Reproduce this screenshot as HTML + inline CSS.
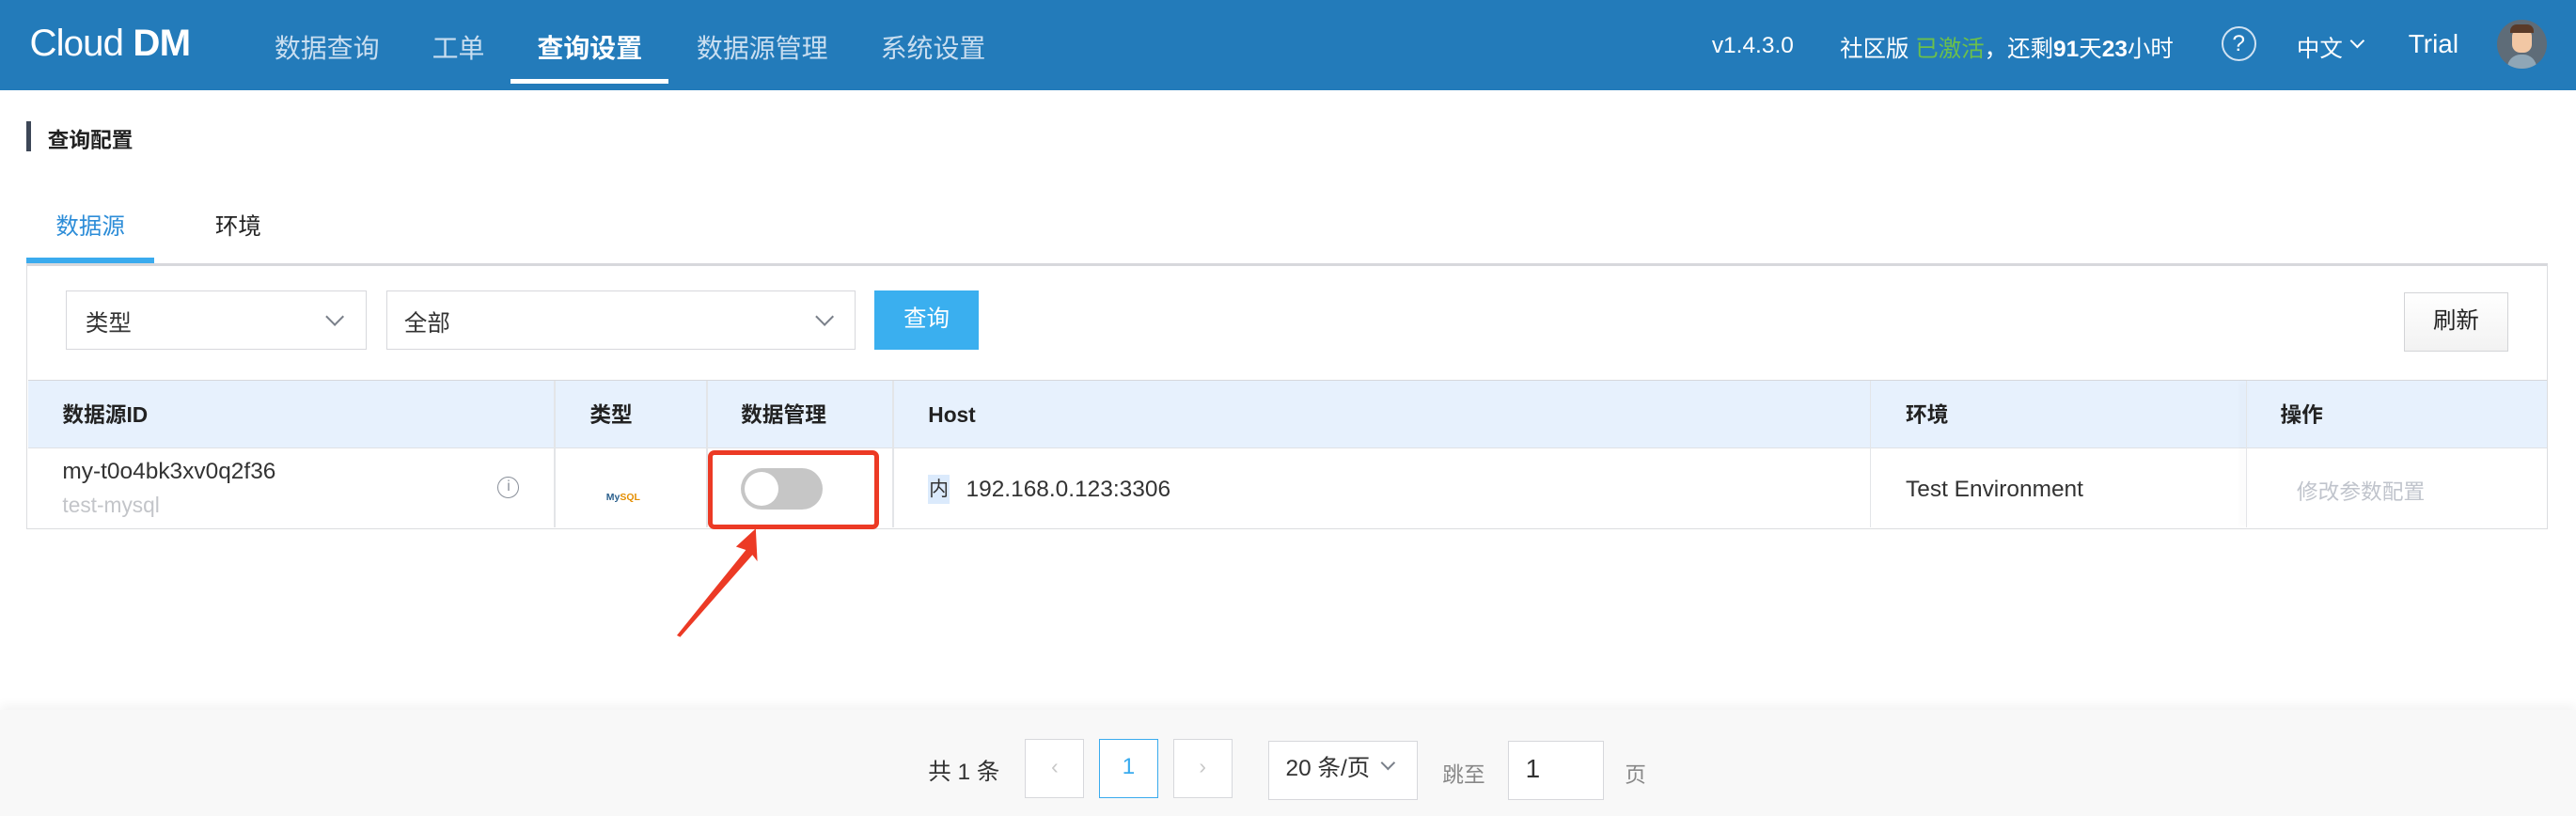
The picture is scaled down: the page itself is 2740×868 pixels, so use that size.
<!DOCTYPE html>
<html><head><meta charset="utf-8"><style>
html,body{margin:0;padding:0;width:2740px;height:868px;overflow:hidden;background:#fff}
#w{position:relative;width:1568px;height:497px;zoom:1.74745;font-family:"Liberation Sans","Noto Sans CJK SC",sans-serif;color:#333;font-size:13px}
.a{position:absolute;white-space:nowrap}
.hdr{left:0;top:0;width:1568px;height:55px;background:#237bba}
.nav{color:#c9def0;font-size:16px;top:17px}
.sel{border:1px solid #d7d8dc;background:#fff;box-sizing:border-box}
.chev{position:absolute;width:7px;height:7px;border-right:1.3px solid #7a808a;border-bottom:1.3px solid #7a808a;transform:rotate(45deg)}
.th{font-weight:bold;color:#222;top:244px;line-height:18px}
.vl{position:absolute;width:1px;background:#e3e5e8}
.pg{border:1px solid #d7d8dc;background:#fff;box-sizing:border-box;text-align:center;line-height:33px}
</style></head><body><div id="w">
<div class="a hdr"></div>
<div class="a" style="left:18px;top:13px;color:#fff;font-size:23px;letter-spacing:-0.5px">Cl<span style="font-size:22px">o</span>ud <span style="font-weight:bold">DM</span></div>
<div class="a nav" style="left:167px">数据查询</div>
<div class="a nav" style="left:263px">工单</div>
<div class="a nav" style="left:327px;color:#fff;font-weight:bold">查询设置</div>
<div class="a" style="left:311px;top:48px;width:96px;height:3px;background:#fff"></div>
<div class="a nav" style="left:424px">数据源管理</div>
<div class="a nav" style="left:536px">系统设置</div>
<div class="a" style="left:1042px;top:20px;color:#fff;font-size:14px">v1.4.3.0</div>
<div class="a" style="left:1120px;top:19px;color:#fff;font-size:14px">社区版 <span style="color:#6cc04a">已激活</span>，还剩<b>91</b>天<b>23</b>小时</div>
<div class="a" style="left:1352px;top:16px;width:19px;height:19px;border:1.5px solid #d0e2f2;border-radius:50%;color:#fff;text-align:center;line-height:19px;font-size:14px">?</div>
<div class="a" style="left:1398px;top:19px;color:#fff;font-size:14px">中文</div>
<div class="chev" style="left:1432px;top:22px;border-color:#fff;width:5px;height:5px"></div>
<div class="a" style="left:1466px;top:18px;color:#fff;font-size:16px">Trial</div>
<div class="a" style="left:1520px;top:12px;width:30px;height:30px;border-radius:50%;background:#5e6c78;overflow:hidden">
<div class="a" style="left:9px;top:5px;width:12px;height:15px;border-radius:5px;background:#f2c7a4"></div>
<div class="a" style="left:8px;top:3px;width:14px;height:5px;border-radius:4px 4px 0 0;background:#5a3a28"></div>
<div class="a" style="left:6px;top:21px;width:18px;height:12px;border-radius:8px 8px 0 0;background:#8fa6b6"></div></div>

<div class="a" style="left:16px;top:74px;width:3px;height:18px;background:#3d4757"></div>
<div class="a" style="left:29px;top:75px;font-weight:bold;color:#222">查询配置</div>

<div class="a" style="left:34px;top:127px;color:#2d8dd8;font-size:14px">数据源</div>
<div class="a" style="left:131px;top:127px;color:#222;font-size:14px">环境</div>
<div class="a" style="left:16px;top:160px;width:1535px;height:162px;border:1px solid #dcdde0;border-top:2px solid #d7d8dc;box-sizing:border-box"></div>
<div class="a" style="left:16px;top:157px;width:78px;height:3px;background:#3aabee"></div>

<div class="a sel" style="left:40px;top:177px;width:183px;height:36px"></div>
<div class="a" style="left:52px;top:186px;font-size:14px">类型</div>
<div class="chev" style="left:200px;top:189px"></div>
<div class="a sel" style="left:235px;top:177px;width:286px;height:36px"></div>
<div class="a" style="left:246px;top:186px;font-size:14px">全部</div>
<div class="chev" style="left:498px;top:189px"></div>
<div class="a" style="left:532px;top:177px;width:64px;height:36px;background:#3aafef;color:#fff;font-size:14px;text-align:center;line-height:36px">查询</div>
<div class="a" style="left:1463px;top:178px;width:64px;height:36px;border:1px solid #d3d4d7;box-sizing:border-box;background:linear-gradient(#fff,#f2f2f2);font-size:14px;text-align:center;line-height:34px;color:#222">刷新</div>

<div class="a" style="left:17px;top:231px;width:1533px;height:41px;background:#e7f1fd;border-top:1px solid #d7d8dc;border-bottom:1px solid #e0e2e5"></div>
<div class="vl" style="left:337px;top:232px;height:89px"></div>
<div class="vl" style="left:430px;top:232px;height:89px"></div>
<div class="vl" style="left:543px;top:232px;height:89px"></div>
<div class="vl" style="left:1138px;top:232px;height:89px"></div>
<div class="vl" style="left:1367px;top:232px;height:89px;box-shadow:-2px 0 4px rgba(0,0,0,.12)"></div>
<div class="a th" style="left:38px">数据源ID</div>
<div class="a th" style="left:359px">类型</div>
<div class="a th" style="left:451px">数据管理</div>
<div class="a th" style="left:565px">Host</div>
<div class="a th" style="left:1160px">环境</div>
<div class="a th" style="left:1388px">操作</div>

<div class="a" style="left:38px;top:279px;font-size:14px">my-t0o4bk3xv0q2f36</div>
<div class="a" style="left:38px;top:300px;color:#c3c5c9">test-mysql</div>
<div class="a" style="left:303px;top:290px;width:12px;height:12px;border:1px solid #8a909a;border-radius:50%;font-size:9px;text-align:center;line-height:12px;color:#8a909a">i</div>
<div class="a" style="left:369px;top:300px;font-size:6px;color:#2a5f8c;font-weight:bold">My<span style="color:#e48e00">SQL</span></div>
<div class="a" style="left:451px;top:285px;width:50px;height:25px;border-radius:13px;background:#c6c6c6"></div>
<div class="a" style="left:453px;top:287px;width:21px;height:21px;border-radius:50%;background:#fff"></div>
<div class="a" style="left:431px;top:274px;width:104px;height:48px;border:3px solid #ec3a25;border-radius:4px;box-sizing:border-box"></div>
<svg class="a" style="left:400px;top:315px" width="80" height="80"><path d="M60 7 L48 18 L54 20 L12 72 L14 73 L58 23 L61 27 Z" fill="#ec3a25"/></svg>
<div class="a" style="left:565px;top:289px;width:13px;height:18px;background:#dbeafc;font-size:12px;line-height:18px;text-align:center">内</div>
<div class="a" style="left:588px;top:290px;font-size:14px">192.168.0.123:3306</div>
<div class="a" style="left:1160px;top:290px;font-size:14px">Test Environment</div>
<div class="a" style="left:1398px;top:289px;color:#c0c4cc">修改参数配置</div>

<div class="a" style="left:0;top:432px;width:1568px;height:65px;background:#f8f8f8;box-shadow:0 -3px 6px rgba(0,0,0,.05)"></div>
<div class="a" style="left:565px;top:459px;font-size:14px">共 1 条</div>
<div class="a pg" style="left:624px;top:450px;width:36px;height:36px;color:#c8c8c8">‹</div>
<div class="a pg" style="left:669px;top:450px;width:36px;height:36px;border-color:#3aabee;color:#3aabee;font-size:14px">1</div>
<div class="a pg" style="left:714px;top:450px;width:36px;height:36px;color:#c8c8c8">›</div>
<div class="a pg" style="left:772px;top:451px;width:91px;height:36px;text-align:left;padding-left:10px;font-size:14px">20 条/页</div>
<div class="chev" style="left:842px;top:461px;width:5px;height:5px"></div>
<div class="a" style="left:878px;top:461px;color:#888">跳至</div>
<div class="a pg" style="left:918px;top:451px;width:58px;height:36px;text-align:left;padding-left:10px;font-size:16px">1</div>
<div class="a" style="left:989px;top:461px;color:#888">页</div>
</div></body></html>
